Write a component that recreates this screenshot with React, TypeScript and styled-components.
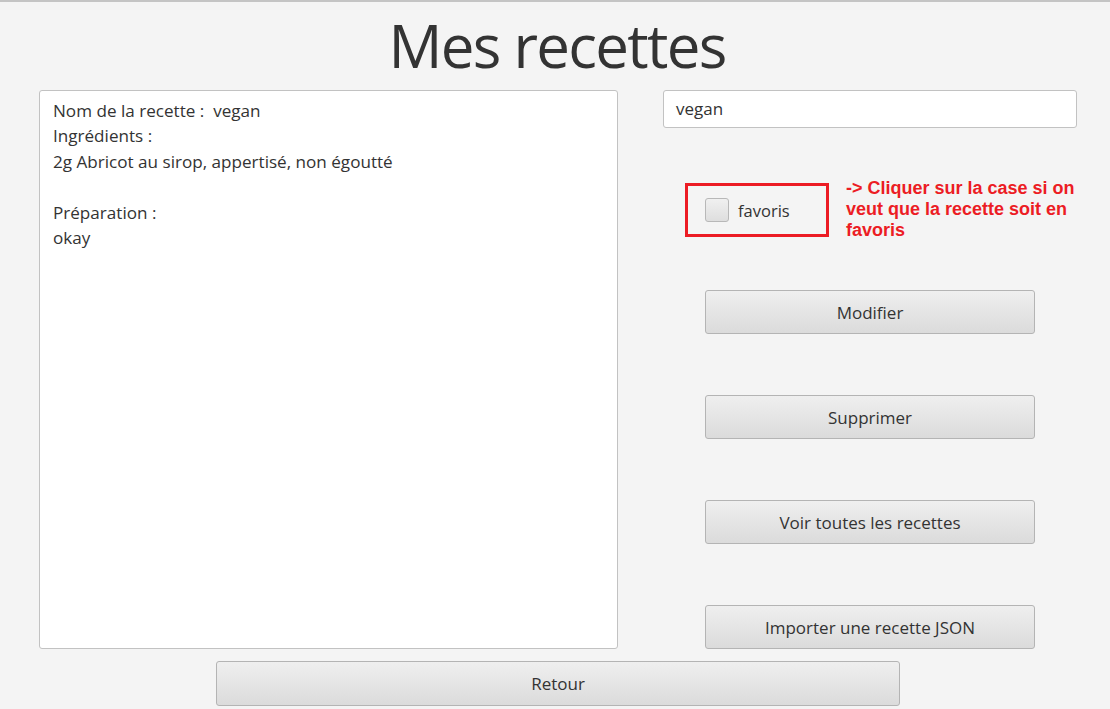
import React from "react";
import styled, { createGlobalStyle } from "styled-components";

const Global = createGlobalStyle`
  html, body { margin: 0; padding: 0; background: #f4f4f4; }
  body { font-family: "Open Sans", "Noto Sans", sans-serif; }
`;

const Page = styled.div`
  width: 1110px;
  height: 709px;
  box-sizing: border-box;
  border-top: 2px solid #c4c4c4;
  background: #f4f4f4;
  display: flex;
  flex-direction: column;
  overflow: hidden;
`;

const Title = styled.h1`
  margin: 0;
  height: 88px;
  font-family: "Open Sans", sans-serif;
  font-weight: 400;
  font-size: 60px;
  line-height: 86px;
  color: #333333;
  text-align: center;
  letter-spacing: -1.7px;
  padding-left: 4px;
  box-sizing: border-box;
`;

const Body = styled.div`
  display: flex;
  padding-left: 39px;
  gap: 45px;
`;

const Area = styled.div`
  width: 579px;
  height: 559px;
  flex-shrink: 0;
  box-sizing: border-box;
  background: #ffffff;
  border: 1px solid #c2c2c2;
  border-radius: 3px;
  padding: 7px 13px;
  font-size: 17.1px;
  line-height: 25.4px;
  color: #333333;
  white-space: pre-wrap;
`;

const Side = styled.div`
  width: 414px;
  display: flex;
  flex-direction: column;
`;

const Field = styled.div`
  height: 38px;
  box-sizing: border-box;
  background: #ffffff;
  border: 1px solid #c2c2c2;
  border-radius: 3px;
  padding: 0 12px;
  font-size: 17px;
  line-height: 36px;
  color: #333333;
`;

const FavRow = styled.div`
  display: flex;
  align-items: flex-start;
  margin-top: 52px;
  margin-left: 22px;
  gap: 17px;
`;

const FavBox = styled.div`
  width: 144px;
  height: 54px;
  flex-shrink: 0;
  box-sizing: border-box;
  border: 3px solid #ec1c24;
  display: flex;
  align-items: center;
  padding-left: 17px;
  gap: 9px;
  margin-top: 3px;
`;

const Check = styled.span`
  width: 24px;
  height: 24px;
  box-sizing: border-box;
  border: 1px solid #b8b8b8;
  border-radius: 3px;
  background: linear-gradient(#f0f0f0, #dedede);
`;

const FavLabel = styled.span`
  font-size: 16.5px;
  color: #333333;
`;

const Note = styled.div`
  font-family: "Liberation Sans", Arial, sans-serif;
  font-weight: 700;
  font-size: 18px;
  line-height: 21px;
  color: #ec1c24;
  width: 250px;
  margin-top: -2px;
`;

const Buttons = styled.div`
  display: flex;
  flex-direction: column;
  margin-left: 42px;
  margin-top: 49px;
  gap: 61px;
`;

const Button = styled.button<{ $w?: number; $h?: number }>`
  width: ${(p) => p.$w ?? 330}px;
  height: ${(p) => p.$h ?? 44}px;
  flex-shrink: 0;
  box-sizing: border-box;
  border: 1px solid #b4b4b4;
  border-radius: 3px;
  background: linear-gradient(#efefef, #dbdbdb);
  font-family: "Open Sans", sans-serif;
  font-size: 17px;
  color: #333333;
  padding: 0;
  cursor: pointer;
`;

const Footer = styled.div`
  display: flex;
  padding-left: 216px;
  margin-top: 12px;
`;

export default function App() {
  const content =
    "Nom de la recette :  vegan\nIngrédients :\n2g Abricot au sirop, appertisé, non égoutté\n\nPréparation :\nokay";
  return (
    <>
      <Global />
      <Page>
        <Title>Mes recettes</Title>
        <Body>
          <Area>{content}</Area>
          <Side>
            <Field>vegan</Field>
            <FavRow>
              <FavBox>
                <Check />
                <FavLabel>favoris</FavLabel>
              </FavBox>
              <Note>-&gt; Cliquer sur la case si on veut que la recette soit en favoris</Note>
            </FavRow>
            <Buttons>
              <Button>Modifier</Button>
              <Button>Supprimer</Button>
              <Button>Voir toutes les recettes</Button>
              <Button>Importer une recette JSON</Button>
            </Buttons>
          </Side>
        </Body>
        <Footer>
          <Button $w={684} $h={45}>Retour</Button>
        </Footer>
      </Page>
    </>
  );
}
